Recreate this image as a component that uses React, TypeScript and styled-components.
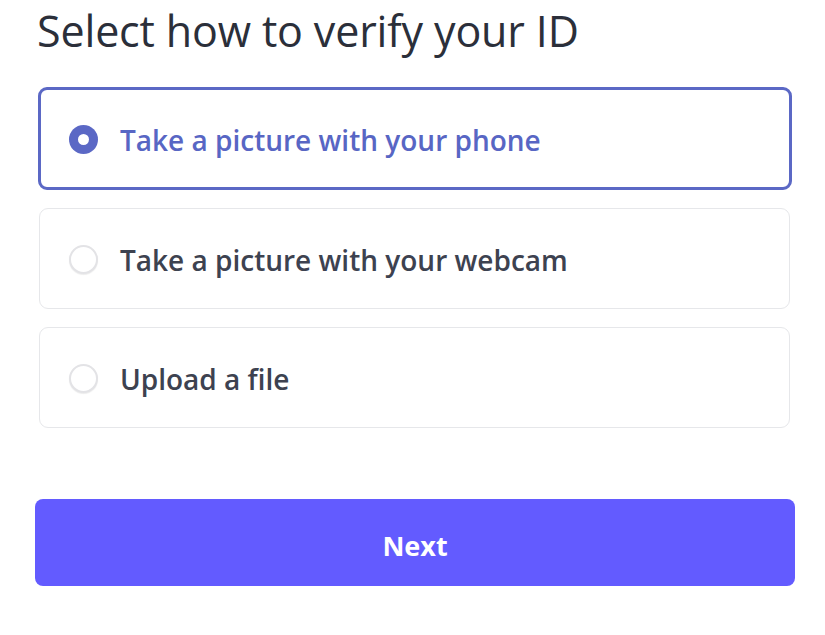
import * as React from 'react';
import styled, { createGlobalStyle } from 'styled-components';

const GlobalStyle = createGlobalStyle`
	html, body {
		margin: 0;
		padding: 0;
		background: #ffffff;
	}
	* {
		box-sizing: border-box;
	}
`;

const Page = styled.div`
	width: 825px;
	padding: 2px 30px 0 35px;
	font-family: 'Open Sans', 'Noto Sans', sans-serif;
`;

const Title = styled.h1`
	margin: 0 0 0 2px;
	font-family: 'Open Sans', 'Noto Sans', sans-serif;
	font-weight: 400;
	font-size: 43px;
	line-height: 58px;
	color: #2b2f3a;
	letter-spacing: -0.15px;
`;

const Options = styled.div`
	display: flex;
	flex-direction: column;
	gap: 18px;
	margin-top: 27px;
	padding: 0 3px;
`;

const Option = styled.label<{ $active?: boolean }>`
	display: flex;
	align-items: center;
	gap: 22px;
	height: ${p => (p.$active ? '103px' : '101px')};
	padding-left: ${p => (p.$active ? '28px' : '29px')};
	padding-top: 2px;
	margin-right: ${p => (p.$active ? '0' : '2px')};
	margin-left: ${p => (p.$active ? '0' : '1px')};
	border: ${p => (p.$active ? '3px solid #5b68c5' : '1.5px solid #e6e7ea')};
	border-radius: 9px;
	background: #ffffff;
	cursor: pointer;
`;

const Radio = styled.span<{ $active?: boolean }>`
	flex: none;
	width: 29px;
	height: 29px;
	border-radius: 50%;
	display: flex;
	align-items: center;
	justify-content: center;
	background: ${p => (p.$active ? '#5b68c5' : '#ffffff')};
	border: ${p => (p.$active ? 'none' : '2px solid #e3e3e6')};
	box-shadow: ${p => (p.$active ? 'none' : '0 1px 1px rgba(0,0,0,0.08)')};

	&::after {
		content: '';
		display: ${p => (p.$active ? 'block' : 'none')};
		width: 11px;
		height: 11px;
		border-radius: 50%;
		background: #ffffff;
	}
`;

const OptionText = styled.span<{ $active?: boolean }>`
	font-size: 28px;
	font-weight: 600;
	color: ${p => (p.$active ? '#5866c4' : '#3d4250')};
	letter-spacing: 0;
`;

const NextButton = styled.button`
	display: block;
	width: 760px;
	height: 87px;
	margin-top: 71px;
	padding-top: 6px;
	border: none;
	border-radius: 8px;
	background: #635bff;
	color: #ffffff;
	font-family: 'Open Sans', 'Noto Sans', sans-serif;
	font-weight: 700;
	font-size: 27px;
	cursor: pointer;
`;

const options = [
	'Take a picture with your phone',
	'Take a picture with your webcam',
	'Upload a file',
];

export default function App() {
	const [selected, setSelected] = React.useState(0);
	return (
		<>
			<GlobalStyle />
			<Page>
				<Title>Select how to verify your ID</Title>
				<Options>
					{options.map((label, i) => (
						<Option key={label} $active={selected === i} onClick={() => setSelected(i)}>
							<Radio $active={selected === i} />
							<OptionText $active={selected === i}>{label}</OptionText>
						</Option>
					))}
				</Options>
				<NextButton>Next</NextButton>
			</Page>
		</>
	);
}
